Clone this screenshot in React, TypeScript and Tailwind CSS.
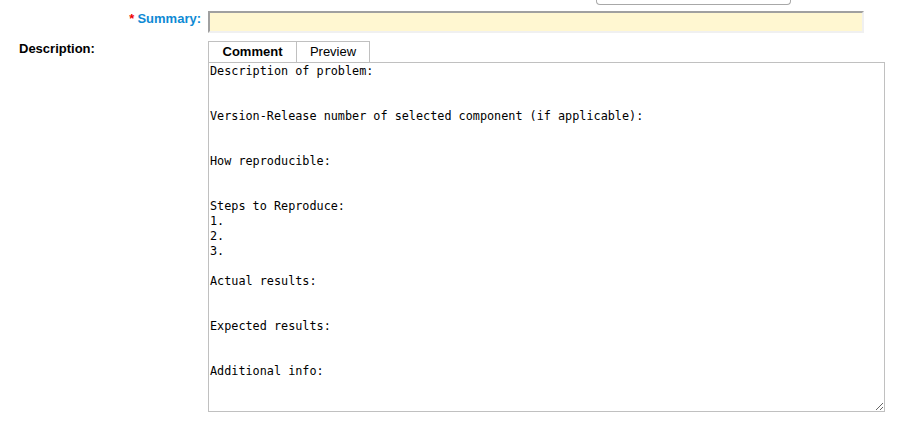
import React from 'react';

const TEMPLATE = `Description of problem:


Version-Release number of selected component (if applicable):


How reproducible:


Steps to Reproduce:
1.
2.
3.

Actual results:


Expected results:


Additional info:
`;

const App: React.FC = () => {
  return (
    <div className="w-[903px] h-[430px] bg-white overflow-hidden font-['Liberation_Sans',Arial,sans-serif] text-[13px] text-black">
      {/* tail of the field above */}
      <div className="flex">
        <div className="ml-[596px] w-[195px] h-[5px] border border-t-0 border-[#a8a8a8] rounded-b-[4px]" />
      </div>

      {/* Summary */}
      <div className="flex items-start mt-[6px]">
        <div className="w-[202px] pr-[1px] text-right font-bold leading-[15px]">
          <span className="text-[#e00] mr-[3px]">*</span>
          <span className="text-[#0e8ad4]">Summary:</span>
        </div>
        <input
          className="ml-[6px] w-[656px] h-[22px] bg-[#fff7d1] border-2 border-t-[#a0a0a0] border-l-[#a0a0a0] border-r-[#f0f0f0] border-b-[#f0f0f0] outline-none px-1"
          defaultValue=""
        />
      </div>

      {/* Description */}
      <div className="flex mt-[8px]">
        <div className="w-[208px] pl-[19px] leading-[15px] font-bold">Description:</div>
        <div className="flex flex-col">
          <div className="flex h-[21px]">
            <div className="w-[89px] border border-b-0 border-[#c0c0c0] flex items-center justify-center font-bold">
              Comment
            </div>
            <div className="w-[74px] -ml-[1px] border border-b-0 border-[#c0c0c0] flex items-center justify-center">
              Preview
            </div>
          </div>
          <textarea
            className="w-[677px] h-[350px] border border-[#c0c0c0] p-[1px] font-['DejaVu_Sans_Mono',monospace] text-[11.8px] leading-[15px] text-black outline-none"
            defaultValue={TEMPLATE}
            spellCheck={false}
          />
        </div>
      </div>
    </div>
  );
};

export default App;
